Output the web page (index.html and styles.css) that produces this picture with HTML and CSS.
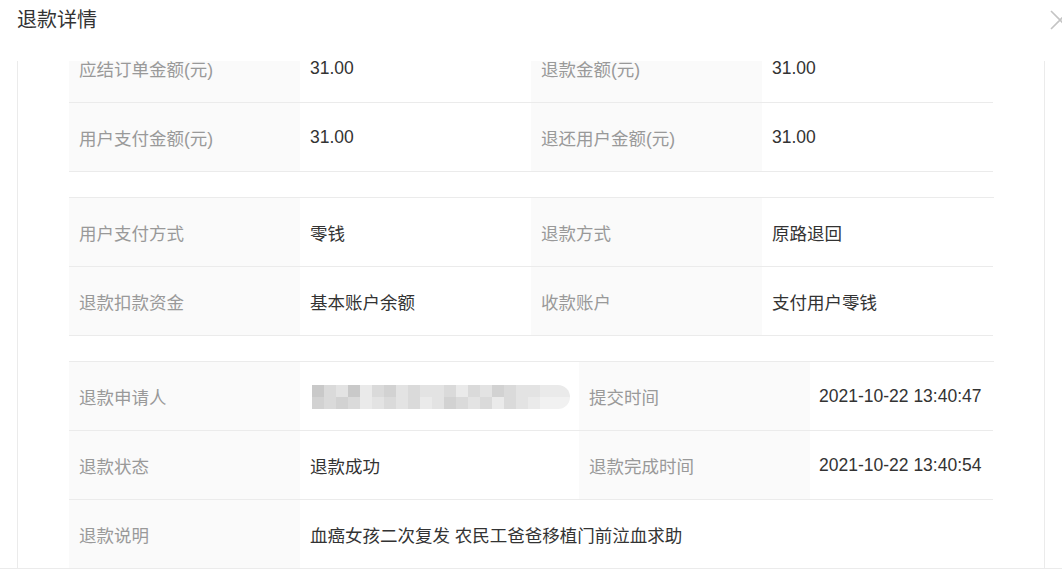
FILE: index.html
```html
<!DOCTYPE html>
<html lang="zh-CN">
<head>
<meta charset="utf-8">
<title>退款详情</title>
<link rel="stylesheet" href="styles.css">
</head>
<body>
<div class="modal">
  <div class="modal-header">
    <span class="modal-title">退款详情</span>
    <svg class="close" width="22" height="22" viewBox="0 0 22 22"><path d="M2 2 L20 20 M20 2 L2 20" stroke="#c4c4c4" stroke-width="1.6" fill="none"/></svg>
  </div>
  <div class="modal-body">
    <div class="sheet">
      <div class="table t-even first">
        <div class="cell lbl">应结订单金额(元)</div>
        <div class="cell val">31.00</div>
        <div class="cell lbl">退款金额(元)</div>
        <div class="cell val">31.00</div>
        <div class="cell lbl">用户支付金额(元)</div>
        <div class="cell val">31.00</div>
        <div class="cell lbl">退还用户金额(元)</div>
        <div class="cell val">31.00</div>
      </div>
      <div class="table t-even">
        <div class="cell lbl">用户支付方式</div>
        <div class="cell val">零钱</div>
        <div class="cell lbl">退款方式</div>
        <div class="cell val">原路退回</div>
        <div class="cell lbl">退款扣款资金</div>
        <div class="cell val">基本账户余额</div>
        <div class="cell lbl">收款账户</div>
        <div class="cell val">支付用户零钱</div>
      </div>
      <div class="table t-wide">
        <div class="cell lbl">退款申请人</div>
        <div class="cell val">
          <div class="mosaic">
            <i class="m1"></i><i class="m3"></i><i class="m4"></i><i class="m1"></i><i class="m5"></i><i class="m3"></i><i class="m2"></i><i class="m4"></i><i class="m3"></i><i class="m4"></i><i class="m4"></i><i class="m3"></i><i class="m5"></i><i class="m3"></i><i class="m4"></i><i class="m2"></i><i class="m3"></i><i class="m4"></i><i class="m4"></i><i class="m5"></i><i class="m5"></i>
            <i class="m2"></i><i class="m3"></i><i class="m2"></i><i class="m3"></i><i class="m5"></i><i class="m4"></i><i class="m3"></i><i class="m4"></i><i class="m3"></i><i class="m5"></i><i class="m4"></i><i class="m2"></i><i class="m3"></i><i class="m4"></i><i class="m3"></i><i class="m5"></i><i class="m3"></i><i class="m4"></i><i class="m5"></i><i class="m6"></i><i class="m6"></i>
          </div>
        </div>
        <div class="cell lbl">提交时间</div>
        <div class="cell val">2021-10-22 13:40:47</div>
        <div class="cell lbl">退款状态</div>
        <div class="cell val">退款成功</div>
        <div class="cell lbl">退款完成时间</div>
        <div class="cell val">2021-10-22 13:40:54</div>
        <div class="cell lbl">退款说明</div>
        <div class="cell val span3">血癌女孩二次复发 农民工爸爸移植门前泣血求助</div>
      </div>
    </div>
  </div>
  <div class="modal-footer"></div>
</div>
</body>
</html>
```
FILE: styles.css
```css
html, body {
  margin: 0;
  padding: 0;
  background: #fff;
}
body {
  font-family: "Liberation Sans", "Noto Sans CJK SC", sans-serif;
  color: #333;
  width: 1062px;
  height: 575px;
  overflow: hidden;
}
.modal {
  display: flex;
  flex-direction: column;
  height: 575px;
}
.modal-header {
  height: 61px;
  flex: none;
  display: flex;
  align-items: flex-start;
  justify-content: space-between;
  padding-left: 17px;
  box-sizing: border-box;
  position: relative;
}
.modal-title {
  font-size: 20px;
  line-height: 40px;
  color: #333;
}
.close {
  position: absolute;
  left: 1049px;
  top: 9px;
}
.modal-body {
  height: 507px;
  flex: none;
  margin-left: 17px;
  margin-right: 17px;
  border-left: 1px solid #ebebeb;
  border-right: 1px solid #ebebeb;
  overflow: hidden;
}
.sheet {
  padding: 0 50px 0 51px;
}
.table {
  display: grid;
  border-top: 1px solid #ebebeb;
  margin-top: 25px;
}
.table.first {
  margin-top: -28px;
}
.t-even {
  grid-template-columns: 231px 231px 231px 231px;
}
.t-wide {
  grid-template-columns: 231px 279px 231px 183px;
}
.cell {
  height: 68px;
  border-bottom: 1px solid #ebebeb;
  display: flex;
  align-items: center;
  padding-left: 10px;
  font-size: 17.5px;
  white-space: nowrap;
  overflow: hidden;
}
.lbl {
  background: #fafafa;
  color: #999;
}
.val {
  background: #fff;
  color: #333;
}
.t-wide .val:nth-child(4),
.t-wide .val:nth-child(8) {
  padding-left: 9px;
}
.span3 {
  grid-column: span 3;
}
.mosaic {
  display: grid;
  grid-template-columns: repeat(20, 12px) 18px;
  grid-template-rows: 12px 12px;
  margin-left: 2px;
  margin-top: 1px;
  border-radius: 0 12px 12px 0;
  overflow: hidden;
}
.mosaic i {
  display: block;
}
.m1 { background: #c9c9c9; }
.m2 { background: #d2d2d2; }
.m3 { background: #dadada; }
.m4 { background: #e3e3e3; }
.m5 { background: #eaeaea; }
.m6 { background: #f1f1f1; }
.modal-footer {
  flex: none;
  height: 7px;
  border-top: 1px solid #ebebeb;
}
```
